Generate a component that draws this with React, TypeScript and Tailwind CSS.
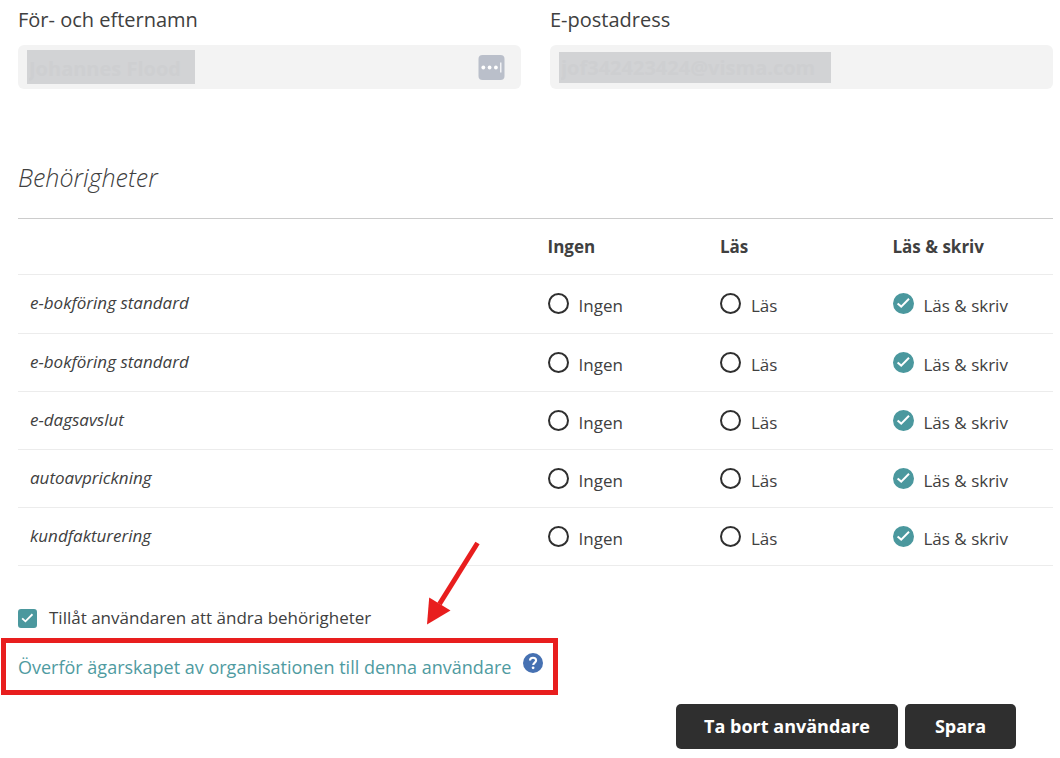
import { useState } from 'react';

const levels = ['Ingen', 'Läs', 'Läs & skriv'];

const services = [
  { id: 'bokforing-1', name: 'e-bokföring standard' },
  { id: 'bokforing-2', name: 'e-bokföring standard' },
  { id: 'dagsavslut', name: 'e-dagsavslut' },
  { id: 'autoavprickning', name: 'autoavprickning' },
  { id: 'kundfakturering', name: 'kundfakturering' },
];

function CheckMark({ className }: { className: string }) {
  return (
    <svg viewBox="0 0 21 21" className={className} fill="none" stroke="currentColor" strokeWidth="2" aria-hidden="true">
      <path d="M4.600 10.400 8.200 13.600 16 5.800" />
    </svg>
  );
}

function LevelOption({ group, label, checked, onSelect }: {
  group: string;
  label: string;
  checked: boolean;
  onSelect: () => void;
}) {
  return (
    <label className="flex items-start gap-2.5 pt-[3px] text-[17px] leading-6">
      <span className="grid shrink-0">
        <input
          type="radio"
          name={group}
          checked={checked}
          onChange={onSelect}
          className="peer col-start-1 row-start-1 size-[21px] appearance-none rounded-full border-2 border-[#2f2f2f] bg-white checked:border-[#4b989e] checked:bg-[#4b989e]"
        />
        <CheckMark className="pointer-events-none invisible col-start-1 row-start-1 size-[21px] text-white peer-checked:visible" />
      </span>
      <span className="pt-px whitespace-nowrap">{label}</span>
    </label>
  );
}

export default function App() {
  const [access, setAccess] = useState<Record<string, string>>(
    Object.fromEntries(services.map((s) => [s.id, 'Läs & skriv'])),
  );
  const [mayEdit, setMayEdit] = useState(true);

  return (
    <main className="bg-white pt-1.5 pr-[7px] pb-2 pl-[18px] font-['Open_Sans',sans-serif] text-[#404040]">
      <div className="grid grid-cols-2 gap-[29px]">
        <div>
          <label htmlFor="name" className="block text-[20px] leading-7">För- och efternamn</label>
          <div className="mt-[11px] flex h-11 items-center justify-between rounded-md bg-[#f3f3f3] pr-4 pl-[9px]">
            <input
              id="name"
              defaultValue="Johannes Flood"
              className="h-[34px] w-[168px] bg-[#d2d3d5] px-0.5 pt-0.5 text-[20px] font-bold text-[#cecfd1] outline-none"
            />
            <svg viewBox="0 0 27 27" className="size-[27px]" aria-hidden="true">
              <rect x="0.5" y="1" width="26" height="25" rx="4" fill="#babfca" />
              <circle cx="5.3" cy="13.5" r="1.9" fill="#fff" />
              <circle cx="11.6" cy="13.5" r="1.9" fill="#fff" />
              <circle cx="17.9" cy="13.5" r="1.9" fill="#fff" />
              <path d="M22.8 8.5v10" stroke="#fff" strokeWidth="1.2" />
            </svg>
          </div>
        </div>
        <div>
          <label htmlFor="email" className="block text-[20px] leading-7">E-postadress</label>
          <div className="mt-[11px] flex h-11 items-center rounded-md bg-[#f3f3f3] px-[9px]">
            <input
              id="email"
              type="email"
              defaultValue="jof342423424@visma.com"
              className="h-[31px] w-[272px] bg-[#d2d3d5] px-0.5 text-[20px] font-bold text-[#cecfd1] outline-none"
            />
          </div>
        </div>
      </div>

      <h2 className="mt-[70px] text-[25px] leading-9 font-light italic">Behörigheter</h2>

      <table className="mt-[23px] w-full table-fixed border-collapse border-t border-[#cccccc] text-left">
        <thead>
          <tr className="h-14 border-b border-[#ececec] text-[17px]">
            <td className="w-1/2" />
            {levels.map((level) => (
              <th key={level} scope="col" className="px-3 pt-px font-bold whitespace-nowrap">{level}</th>
            ))}
          </tr>
        </thead>
        <tbody>
          {services.map((service) => (
            <tr key={service.id} className="h-[58px] border-b border-[#ececec] first:h-[59px]">
              <th scope="row" className="px-3 pb-0.5 text-[17px] leading-6 font-normal italic">{service.name}</th>
              {levels.map((level) => (
                <td key={level} className="px-3">
                  <LevelOption
                    group={service.id}
                    label={level}
                    checked={access[service.id] === level}
                    onSelect={() => setAccess({ ...access, [service.id]: level })}
                  />
                </td>
              ))}
            </tr>
          ))}
        </tbody>
      </table>

      <label className="mt-10 flex w-fit items-center gap-3 text-[17px] leading-6">
        <span className="grid">
          <input
            type="checkbox"
            checked={mayEdit}
            onChange={(e) => setMayEdit(e.target.checked)}
            className="peer col-start-1 row-start-1 size-[19px] appearance-none rounded-[3px] border-2 border-[#2f2f2f] checked:border-[#4b989e] checked:bg-[#4b989e]"
          />
          <CheckMark className="pointer-events-none invisible col-start-1 row-start-1 size-[19px] text-white peer-checked:visible" />
        </span>
        Tillåt användaren att ändra behörigheter
      </label>

      <div className="relative mt-2 -ml-[17px] flex h-[57px] w-fit items-center gap-3 border-[5px] border-[#e81e1e] pr-2.5 pl-3">
        <a href="#transfer" className="text-[18px] leading-6 whitespace-nowrap text-[#4f9ba1]">
          Överför ägarskapet av organisationen till denna användare
        </a>
        <button type="button" aria-label="Hjälp" className="mb-2">
          <svg viewBox="0 0 20 20" className="size-5" aria-hidden="true">
            <circle cx="10" cy="10" r="10" fill="#4671b2" />
            <path d="M7 7.6C7 5.4 8.3 4.7 10 4.7s3.1.9 3.1 2.7c0 2.1-2.9 2.3-2.9 4.7" fill="none" stroke="#fff" strokeWidth="2.1" />
            <circle cx="10.1" cy="14.8" r="1.4" fill="#fff" />
          </svg>
        </button>
        <svg viewBox="0 0 56 86" className="pointer-events-none absolute right-[71px] bottom-[64px] h-[86px] w-14" aria-hidden="true">
          <path d="M51.5 3 13.5 64" stroke="#e81e1e" strokeWidth="5" />
          <path d="M1 84.500 3.200 57.500 24.500 70.500Z" fill="#e81e1e" />
        </svg>
      </div>

      <div className="mt-[9px] flex justify-end gap-[7px] pr-[37px]">
        <button type="button" className="h-[45px] rounded-[5px] bg-[#2f2f2f] px-7 text-[18px] font-bold text-white">
          Ta bort användare
        </button>
        <button type="button" className="h-[45px] min-w-[111px] rounded-[5px] bg-[#2f2f2f] px-7 text-[18px] font-bold text-white">
          Spara
        </button>
      </div>
    </main>
  );
}
